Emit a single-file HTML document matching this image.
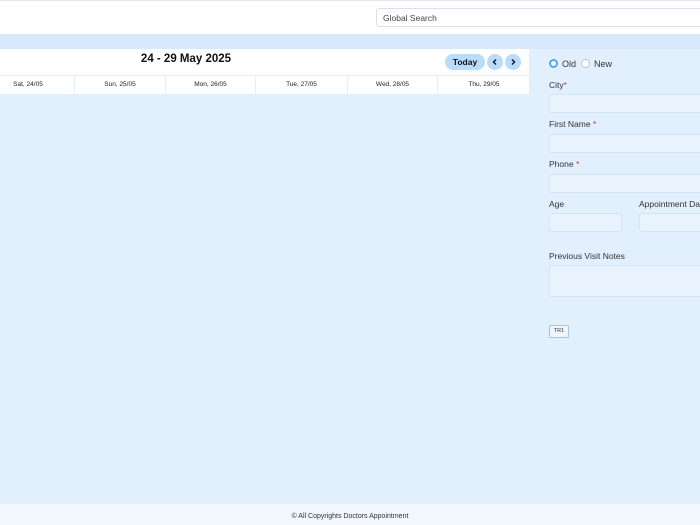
<!DOCTYPE html><html><head><style>
html,body{margin:0;width:700px;height:525px;overflow:hidden}
body{background:#e2effd;font-family:"Liberation Sans",sans-serif;position:relative}
.a{position:absolute}
.top{left:0;top:0;width:700px;height:34px;background:#fff;border-top:1px solid #e4e8ee;box-sizing:border-box}
.search{left:376px;top:8px;width:330px;height:19px;border:1px solid #d6e2ee;border-radius:3px;font-size:8.5px;color:#444;line-height:18px;padding-left:6px;box-sizing:border-box}
.band{left:0;top:34px;width:700px;height:15px;background:#d7e9fc}
.cal{left:0;top:49px;width:529px;height:45px;background:#fff}
.title{left:0;width:372px;top:53px;text-align:center;font-weight:bold;font-size:11.5px;color:#111}
.today{left:445px;top:54px;width:40px;height:16px;background:#b9dcfb;border-radius:8px;font-size:8.5px;font-weight:bold;text-align:center;line-height:16px;color:#111}
.nav{top:54px;width:16px;height:16px;border-radius:8px;background:#b9dcfb}
.nav svg{position:absolute;left:4px;top:4px}
.row{left:0;top:75px;width:529px;height:19px;border-top:1px solid #e8eef5}
.c{position:absolute;top:0;height:19px;border-left:1px solid #e6edf5;font-size:6.5px;text-align:center;line-height:18px;color:#222}
.lab{font-size:8.5px;color:#333;left:549px}
.inp{background:#e9f3fe;border:1px solid #d2e4f7;border-radius:3px;height:19px;box-sizing:border-box}
.r{color:#d33}
.foot{left:0;top:504px;width:700px;height:21px;background:#f1f7fd;font-size:7px;text-align:center;line-height:26px;color:#333}
</style></head><body>
<div class="a top"></div>
<div class="a search">Global Search</div>
<div class="a band"></div>
<div class="a cal"></div>
<div class="a title">24 - 29 May 2025</div>
<div class="a today">Today</div>
<div class="a nav" style="left:487px"><svg width="8" height="8" viewBox="0 0 8 8"><path d="M5 1.5L2.5 4L5 6.5" stroke="#112" stroke-width="1.4" fill="none"/></svg></div>
<div class="a nav" style="left:505px"><svg width="8" height="8" viewBox="0 0 8 8"><path d="M3 1.5L5.5 4L3 6.5" stroke="#112" stroke-width="1.4" fill="none"/></svg></div>
<div class="a row">
<div class="c" style="left:-17px;width:90px;border-left:0">Sat, 24/05</div>
<div class="c" style="left:74px;width:90px">Sun, 25/05</div>
<div class="c" style="left:165px;width:89px">Mon, 26/05</div>
<div class="c" style="left:255px;width:91px">Tue, 27/05</div>
<div class="c" style="left:347px;width:89px">Wed, 28/05</div>
<div class="c" style="left:437px;width:92px">Thu, 29/05</div>
</div>
<div class="a" style="left:549px;top:59px;width:9px;height:9px;border-radius:50%;background:#fff;border:2.5px solid #5aa3e8;box-sizing:border-box"></div>
<div class="a lab" style="left:562px;top:59px;font-size:9px">Old</div>
<div class="a" style="left:581px;top:59px;width:9px;height:9px;border-radius:50%;background:#fff;border:1px solid #b9c4d0;box-sizing:border-box"></div>
<div class="a lab" style="left:594px;top:59px;font-size:9px">New</div>
<div class="a lab" style="top:80px">City<span class="r">*</span></div>
<div class="a inp" style="left:549px;top:94px;width:160px"></div>
<div class="a lab" style="top:119px">First Name <span class="r">*</span></div>
<div class="a inp" style="left:549px;top:134px;width:160px"></div>
<div class="a lab" style="top:159px">Phone <span class="r">*</span></div>
<div class="a inp" style="left:549px;top:174px;width:160px"></div>
<div class="a lab" style="top:199px">Age</div>
<div class="a lab" style="left:639px;top:199px;white-space:nowrap">Appointment Date</div>
<div class="a inp" style="left:549px;top:213px;width:73px"></div>
<div class="a inp" style="left:639px;top:213px;width:70px"></div>
<div class="a lab" style="top:251px">Previous Visit Notes</div>
<div class="a inp" style="left:549px;top:265px;width:160px;height:32px"></div>
<div class="a" style="left:549px;top:325px;width:18px;height:11px;border:1px solid #aac3dc;border-radius:2px;font-size:5.5px;text-align:center;line-height:11px;background:#eef5fd;color:#333">TR1</div>
<div class="a foot">© All Copyrights Doctors Appointment</div>
</body></html>
